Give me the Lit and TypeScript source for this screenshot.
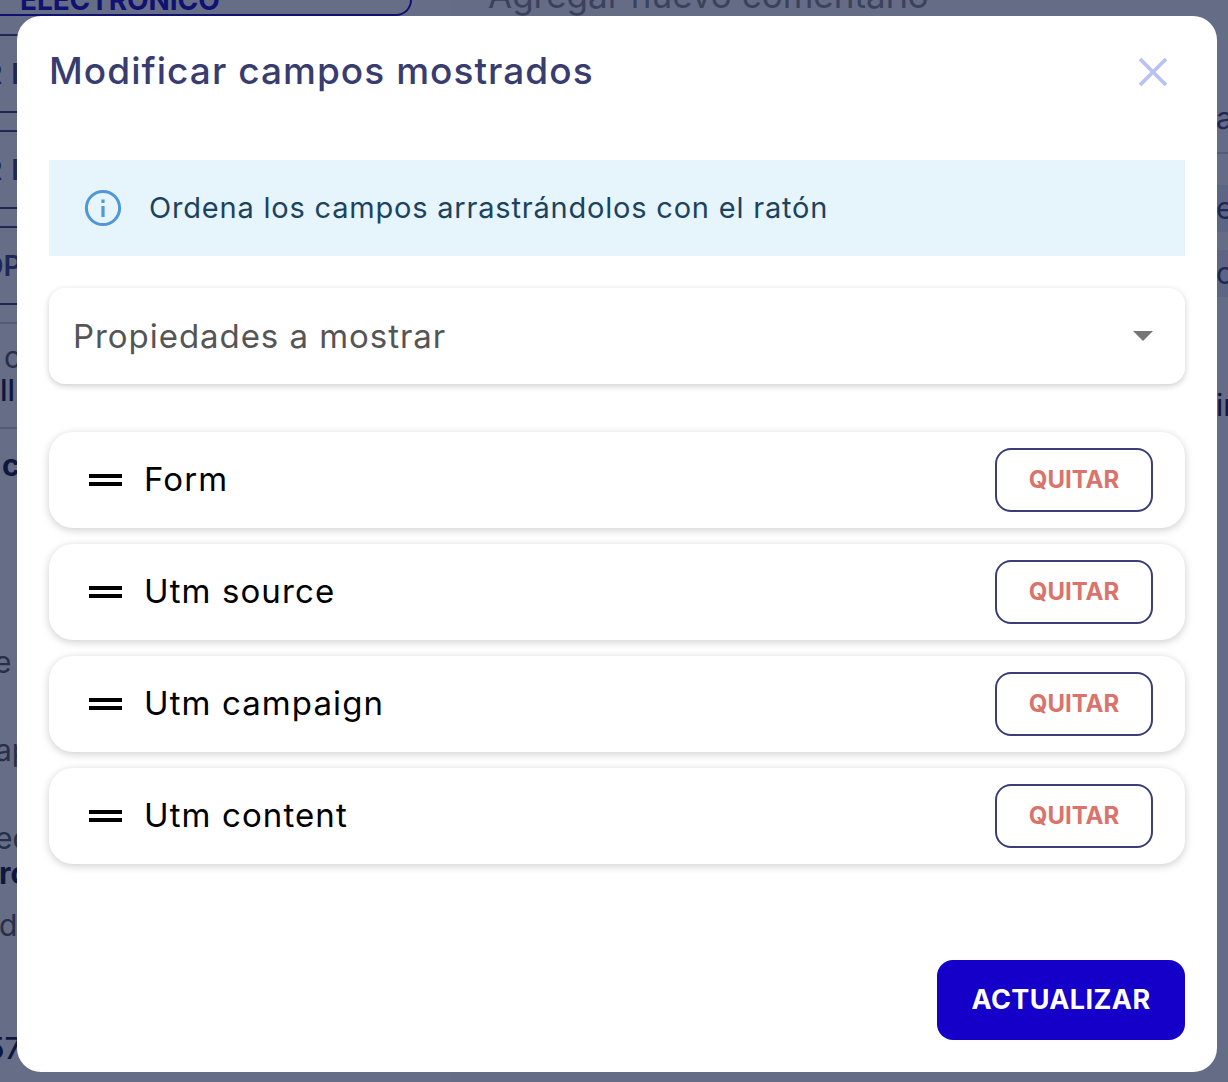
import {LitElement, html, css} from 'lit';
import {customElement} from 'lit/decorators.js';

const FIELDS = ['Form', 'Utm source', 'Utm campaign', 'Utm content'];

@customElement('app-root')
export class AppRoot extends LitElement {
  render() {
    return html`
      <div class="page">
        <div class="behind">
          <div class="behind-left">
            <div class="mail-btn"><span>ELECTRONICO</span></div>
            <div class="tab"><span class="tab-text">R I</span></div>
            <div class="tab"><span class="tab-text">R I</span></div>
            <div class="tab"><span class="tab-text op">OP</span></div>
            <div class="rule r1"></div>
            <div class="row faint m1">o</div>
            <div class="row dark m2">ll</div>
            <div class="rule r2"></div>
            <div class="row dark bold m3">c</div>
            <div class="row faint m4">e</div>
            <div class="row faint m5">ap</div>
            <div class="row faint m5">ec</div>
            <div class="row dark bold m6">ro</div>
            <div class="row faint m7">d</div>
            <div class="row dark m8">57</div>
          </div>
          <div class="behind-right">
            <div class="comment">Agregar nuevo comentario</div>
            <div class="side s1">a</div>
            <div class="rule s2"></div>
            <div class="side band s3">e</div>
            <div class="side band s4">ct</div>
            <div class="side s5">in</div>
          </div>
        </div>
        <div class="overlay">
          <section class="modal">
            <header class="head">
              <h2>Modificar campos mostrados</h2>
              <svg class="close" width="32" height="32" viewBox="0 0 32 32" fill="none">
                <path d="M3 3L29 29M29 3L3 29" stroke="#b9c0f5" stroke-width="3.6"/>
              </svg>
            </header>
            <div class="alert">
              <svg width="38" height="38" viewBox="0 0 38 38" fill="none">
                <circle cx="19" cy="19" r="16.6" stroke="#4f97d7" stroke-width="3"/>
                <rect x="17.4" y="17" width="3.2" height="11" fill="#4f97d7"/>
                <rect x="17.4" y="10.5" width="3.2" height="3.4" fill="#4f97d7"/>
              </svg>
              <span class="alert-text">Ordena los campos arrastrándolos con el ratón</span>
            </div>
            <div class="select">
              <span>Propiedades a mostrar</span>
              <i class="caret"></i>
            </div>
            <div class="list">
              ${FIELDS.map(
                (f) => html`
                  <div class="item">
                    <span class="handle"></span>
                    <span class="name">${f}</span>
                    <button class="remove">QUITAR</button>
                  </div>
                `
              )}
            </div>
            <footer class="foot">
              <button class="submit">ACTUALIZAR</button>
            </footer>
          </section>
        </div>
      </div>
    `;
  }

  static styles = css`
    :host {
      display: block;
      font-family: 'Inter', 'Noto Sans', sans-serif;
    }
    .page {
      position: relative;
      height: 1082px;
      overflow: hidden;
      background: #fff;
    }

    /* page behind the dialog, only its edges show */
    .behind {
      display: grid;
      grid-template-columns: 412px 1fr;
      column-gap: 37px;
      height: 100%;
    }
    .behind-left {
      display: flex;
      flex-direction: column;
      align-items: stretch;
      color: #555;
    }
    .mail-btn {
      box-sizing: border-box;
      height: 16px;
      padding-left: 20px;
      margin-bottom: 18px;
      border: 2px solid #1400c8;
      border-top: 0;
      border-left: 0;
      border-radius: 0 0 16px 0;
      color: #1400c8;
      font-size: 28px;
      font-weight: 700;
      line-height: 0;
      letter-spacing: -0.1px;
    }
    .tab {
      height: 79px;
      margin-bottom: 17px;
      border-top: 2px solid #3b3f74;
      border-bottom: 2px solid #3b3f74;
      box-sizing: border-box;
      display: flex;
      align-items: center;
      color: #3b3f74;
      font-size: 28px;
      font-weight: 600;
    }
    .tab-text {
      margin-left: -16px;
      word-spacing: 2px;
    }
    .tab-text.op {
      margin-left: -18px;
    }
    .rule {
      height: 2px;
      background: #ccc;
    }
    .r1 { margin-top: 0; }
    .r2 { margin-top: 21px; }
    .row {
      font-size: 30px;
      line-height: 32px;
    }
    .dark { color: #10123a; font-weight: 500; }
    .bold { font-weight: 700; }
    .m1 { margin-top: 17px; margin-left: 4px; }
    .m2 { margin-top: 1px; }
    .m3 { margin-top: 20px; margin-left: 2px; }
    .m4 { margin-top: 165px; margin-left: -6px; }
    .m5 { margin-top: 56px; margin-left: -5px; }
    .m6 { margin-top: 3px; margin-left: -1px; }
    .m7 { margin-top: 20px; margin-left: -1px; }
    .m8 { margin-top: 91px; margin-left: -14px; }
    .behind-right {
      display: flex;
      flex-direction: column;
      background: #fbfbff;
    }
    .comment {
      height: 16px;
      margin-top: -13px;
      padding-left: 39px;
      font-size: 35px;
      line-height: 16px;
      color: #888;
    }
    .side {
      height: 32px;
      line-height: 32px;
      font-size: 30px;
      color: #3b3f74;
      padding-left: 767px;
      white-space: nowrap;
    }
    .band {
      height: 47px;
      line-height: 47px;
      background: #e6e8fb;
    }
    .s1 { margin-top: 99px; }
    .s2 { margin-top: 18px; }
    .s3 { margin-top: 31px; }
    .s4 { margin-top: 18px; }
    .s5 { margin-top: 92px; color: #10123a; }

    .overlay {
      position: absolute;
      inset: 0;
      box-sizing: border-box;
      padding: 16px 11px 10px 17px;
      background: rgba(16, 26, 66, 0.64);
    }
    .modal {
      height: 1056px;
      box-sizing: border-box;
      padding: 32px;
      background: #fff;
      border-radius: 24px;
      display: flex;
      flex-direction: column;
    }
    .head {
      display: flex;
      align-items: center;
      justify-content: space-between;
      height: 48px;
      margin-bottom: 64px;
    }
    h2 {
      margin: 0 0 3px;
      font-size: 37px;
      font-weight: 500;
      letter-spacing: 1.05px;
      color: #383c6f;
    }
    .close {
      margin-right: 16px;
    }
    .alert {
      height: 96px;
      box-sizing: border-box;
      padding-left: 35px;
      display: flex;
      align-items: center;
      gap: 27px;
      background: #e6f4fc;
      color: #1b4360;
      font-size: 29px;
      letter-spacing: 0.8px;
    }
    .alert-text {
      padding-bottom: 2px;
    }
    .select {
      height: 96px;
      margin-top: 32px;
      padding: 0 32px 0 24px;
      display: flex;
      align-items: center;
      justify-content: space-between;
      border-radius: 16px;
      box-shadow: 0 2px 6px rgba(0, 0, 0, 0.2);
      color: #555;
      font-size: 33px;
      letter-spacing: 0.95px;
    }
    .caret {
      border-left: 10px solid transparent;
      border-right: 10px solid transparent;
      border-top: 10px solid #757575;
    }
    .list {
      display: flex;
      flex-direction: column;
      gap: 16px;
      margin-top: 48px;
    }
    .item {
      height: 96px;
      display: flex;
      align-items: center;
      padding: 0 32px 0 40px;
      border-radius: 24px;
      box-shadow: 0 2px 8px rgba(0, 0, 0, 0.2);
    }
    .handle {
      width: 33px;
      height: 12px;
      box-sizing: border-box;
      border-top: 4px solid #000;
      border-bottom: 4px solid #000;
      margin-right: 22px;
    }
    .name {
      flex: 1;
      padding-bottom: 2px;
      font-size: 33px;
      letter-spacing: 1.1px;
      color: #000;
    }
    button {
      font-family: inherit;
      cursor: pointer;
    }
    .remove {
      width: 158px;
      height: 64px;
      padding: 0 0 2px;
      background: #fff;
      border: 2px solid #3b3f74;
      border-radius: 16px;
      color: #d9736b;
      font-size: 24px;
      font-weight: 700;
    }
    .foot {
      margin-top: auto;
      display: flex;
      justify-content: flex-end;
    }
    .submit {
      width: 248px;
      height: 80px;
      padding: 0 0 2px;
      border: 0;
      border-radius: 16px;
      background: #1400c8;
      color: #fff;
      font-size: 27px;
      font-weight: 700;
      letter-spacing: 0.4px;
    }
  `;
}

declare global {
  interface HTMLElementTagNameMap {
    'app-root': AppRoot;
  }
}
